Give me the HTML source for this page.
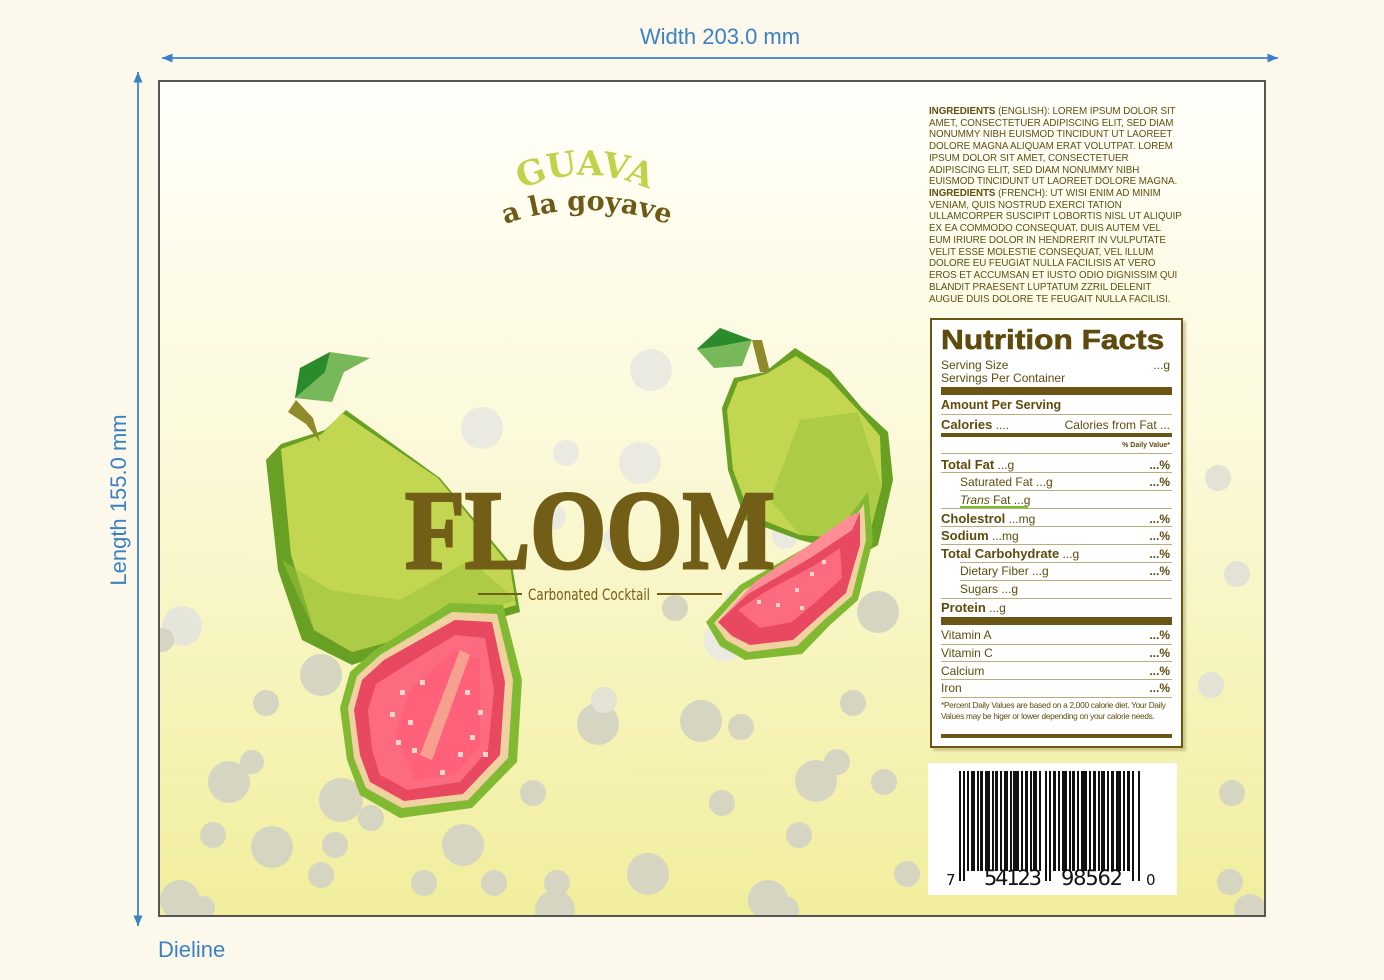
<!DOCTYPE html>
<html><head><meta charset="utf-8"><style>
*{margin:0;padding:0;box-sizing:border-box}
body{width:1384px;height:980px;background:#fcf8ec;position:relative;overflow:hidden;font-family:"Liberation Sans",sans-serif}
.a{position:absolute;white-space:nowrap}
.ing{position:absolute;left:929px;top:106px;font-size:9.8px;line-height:11.72px;color:#5f4f0e;letter-spacing:-0.05px;white-space:nowrap}
.nf{position:absolute;left:930px;top:318px;width:253px;height:430px;background:#fff;border:2px solid #6b5514;box-shadow:3px 3px 2px rgba(150,140,80,.4)}
.nf .a{color:#5e4b0d;font-size:12px}
.b{font-weight:bold}
.ln{position:absolute;height:1px;background:#b9ad80}
.bar{position:absolute;background:#6b5514;left:9px;width:231px}
.r{right:11px}
</style></head><body>
<svg class="a" style="left:0;top:0" width="1384" height="980">
<defs>
<linearGradient id="bg" x1="0" y1="0" x2="0" y2="1"><stop offset="0" stop-color="#fffffb"/><stop offset=".45" stop-color="#fbf9d8"/><stop offset="1" stop-color="#f1ee9c"/></linearGradient>
<marker id="ar" markerWidth="8" markerHeight="8" refX="7" refY="4" orient="auto"><path d="M0,1 L7,4 L0,7" fill="#3a82c4"/></marker>
<clipPath id="cl"><rect x="160" y="82" width="1104" height="833"/></clipPath>
</defs>
<line x1="162" y1="58" x2="1278" y2="58" stroke="#3a82c4" stroke-width="1.5" marker-end="url(#ar)"/>
<line x1="1278" y1="58" x2="162" y2="58" stroke="#3a82c4" stroke-width="1.5" marker-end="url(#ar)"/>
<line x1="138" y1="72" x2="138" y2="926" stroke="#3a82c4" stroke-width="1.5" marker-end="url(#ar)"/>
<line x1="138" y1="926" x2="138" y2="72" stroke="#3a82c4" stroke-width="1.5" marker-end="url(#ar)"/>
<text x="720" y="44" font-size="22" fill="#3a82c4" text-anchor="middle" font-family="Liberation Sans">Width 203.0 mm</text>
<text x="126" y="500" font-size="22" fill="#3a82c4" text-anchor="middle" font-family="Liberation Sans" transform="rotate(-90 126 500)">Length 155.0 mm</text>
<text x="158" y="957" font-size="22" fill="#3a82c4" font-family="Liberation Sans">Dieline</text>
<rect x="159" y="81" width="1106" height="835" fill="url(#bg)" stroke="#555" stroke-width="2"/>
<g clip-path="url(#cl)">
<g fill="#d6d5c2">
<circle cx="182" cy="626" r="20" fill="#e6e5da"/><circle cx="321" cy="675" r="21"/><circle cx="266" cy="703" r="13"/><circle cx="229" cy="782" r="21"/><circle cx="252" cy="762" r="12"/><circle cx="213" cy="835" r="13"/><circle cx="272" cy="847" r="21"/><circle cx="341" cy="800" r="22"/><circle cx="371" cy="818" r="13"/><circle cx="335" cy="845" r="13"/><circle cx="321" cy="875" r="13"/><circle cx="180" cy="900" r="20"/><circle cx="203" cy="908" r="12"/><circle cx="162" cy="640" r="12"/>
<circle cx="424" cy="883" r="13"/><circle cx="463" cy="845" r="21"/><circle cx="494" cy="883" r="13"/><circle cx="533" cy="793" r="13"/><circle cx="557" cy="883" r="13"/><circle cx="555" cy="910" r="20"/><circle cx="648" cy="874" r="21"/><circle cx="598" cy="724" r="21"/><circle cx="604" cy="700" r="13" fill="#e3e2d4"/><circle cx="701" cy="721" r="21"/><circle cx="741" cy="727" r="13"/><circle cx="722" cy="803" r="13"/><circle cx="799" cy="835" r="13"/><circle cx="816" cy="781" r="21"/><circle cx="837" cy="762" r="13"/><circle cx="884" cy="782" r="13"/><circle cx="907" cy="874" r="13"/><circle cx="768" cy="900" r="20"/><circle cx="785" cy="910" r="14"/><circle cx="853" cy="703" r="13"/><circle cx="878" cy="612" r="21"/><circle cx="675" cy="608" r="13"/>
<circle cx="1232" cy="793" r="13"/><circle cx="1211" cy="685" r="13" fill="#e3e2d4"/><circle cx="1237" cy="574" r="13" fill="#e3e2d4"/><circle cx="1218" cy="478" r="13" fill="#e3e2d4"/><circle cx="1230" cy="882" r="13"/><circle cx="1250" cy="910" r="16"/>
</g>
<g fill="#ebeae0">
<circle cx="651" cy="370" r="21"/><circle cx="482" cy="428" r="21"/><circle cx="640" cy="463" r="21"/><circle cx="566" cy="453" r="13"/><circle cx="616" cy="540" r="13"/><circle cx="553" cy="517" r="13"/><circle cx="743" cy="608" r="21"/><circle cx="725" cy="640" r="21"/><circle cx="785" cy="536" r="13"/>
</g>
<!-- left guava -->
<polygon points="266,460 281,444 325,430 346,410 440,478 512,565 520,612 440,635 352,665 302,640 278,570" fill="#67a022"/>
<polygon points="281,449 322,434 342,413 438,478 510,566 516,605 440,628 352,652 314,630 291,555" fill="#c3d652"/>
<polygon points="282,560 330,590 400,600 470,560 516,600 440,628 352,652 314,630" fill="#9cc23e" opacity=".55"/>
<path d="M320,442 L306,424 L288,412 L296,400 L313,418 Z" fill="#8f8a2c"/>
<polygon points="295,398 300,368 330,352 370,358 344,372 332,402" fill="#77b85a"/>
<polygon points="295,398 300,368 330,352 325,372" fill="#2b8a2c"/>
<!-- right guava -->
<polygon points="734,378 765,372 795,348 830,370 862,408 888,432 893,480 878,545 860,555 800,540 745,520 728,470 722,408" fill="#67a022"/>
<polygon points="738,382 766,374 796,356 828,378 858,410 880,436 882,486 868,540 800,535 750,515 733,470 727,410" fill="#c3d652"/>
<polygon points="800,420 858,412 882,486 868,540 800,535 770,500" fill="#9cc23e" opacity=".55"/>
<path d="M770,372 L762,340 L752,340 L760,372 Z" fill="#8f8a2c"/>
<polygon points="697,349 720,328 752,340 742,366 714,368" fill="#77b85a"/>
<polygon points="697,349 720,328 752,340 720,346" fill="#2b8a2c"/>
<!-- left slice -->
<polygon points="340,708 350,672 375,650 450,603 503,605 522,680 517,762 472,808 400,818 360,795 347,760" fill="#82b933"/>
<polygon points="348,708 357,676 380,655 452,612 497,614 513,680 508,758 468,800 402,808 366,788 354,758" fill="#f0d2a0"/>
<polygon points="354,710 362,680 384,660 455,620 492,622 505,682 500,755 463,794 404,801 370,782 360,755" fill="#e84860"/>
<polygon points="368,710 376,684 398,670 455,635 485,638 494,690 488,750 460,782 408,790 380,775 372,750" fill="#fc6b80"/>
<polygon points="395,735 410,690 455,650 480,660 480,745 455,775 415,780" fill="#ff5d76" opacity=".7"/>
<polygon points="420,755 460,650 470,655 432,760" fill="#f7a090"/>
<g fill="#ffd6cc"><rect x="400" y="690" width="5" height="5"/><rect x="390" y="712" width="5" height="5"/><rect x="408" y="720" width="5" height="5"/><rect x="396" y="740" width="5" height="5"/><rect x="412" y="748" width="5" height="5"/><rect x="420" y="680" width="5" height="5"/><rect x="465" y="690" width="5" height="5"/><rect x="478" y="710" width="5" height="5"/><rect x="470" y="735" width="5" height="5"/><rect x="458" y="752" width="5" height="5"/><rect x="440" y="770" width="5" height="5"/><rect x="483" y="752" width="5" height="5"/></g>
<!-- right slice -->
<polygon points="706,622 740,585 805,548 848,518 868,492 873,540 858,600 830,625 802,654 745,660 720,646" fill="#82b933"/>
<polygon points="714,623 744,590 808,554 850,525 864,504 866,540 852,596 824,620 797,646 748,652 726,640" fill="#f0d2a0"/>
<polygon points="718,622 748,594 810,558 852,530 860,512 860,545 846,593 820,616 793,640 750,645 732,636" fill="#e84860"/>
<polygon points="738,610 765,592 815,565 840,548 842,578 818,600 792,622 760,628" fill="#fc6b80"/>
<polygon points="718,622 748,594 810,558 852,530 860,512 850,516 805,548 755,582" fill="#ff8d96"/>
<g fill="#ffd6cc"><rect x="757" y="600" width="4" height="4"/><rect x="776" y="603" width="4" height="4"/><rect x="795" y="588" width="4" height="4"/><rect x="810" y="572" width="4" height="4"/><rect x="822" y="560" width="4" height="4"/><rect x="800" y="606" width="4" height="4"/></g>
</g>
<!-- title -->
<path id="arc1" d="M515,192 Q585,158 655,192" fill="none"/>
<text font-family="DejaVu Serif" font-weight="bold" font-size="34" fill="#bfd24a"><textPath href="#arc1" startOffset="50%" text-anchor="middle">GUAVA</textPath></text>
<path id="arc2" d="M490,230 Q585,190 684,230" fill="none"/>
<text font-family="DejaVu Serif" font-weight="bold" font-size="27" fill="#6e5a15"><textPath href="#arc2" startOffset="50%" text-anchor="middle">a  la  goyave</textPath></text>
<text x="405" y="568" font-family="Liberation Serif" font-weight="bold" font-size="112" fill="#735e18" stroke="#735e18" stroke-width="3" textLength="370" lengthAdjust="spacingAndGlyphs">FLOOM</text>
<line x1="478" y1="594" x2="522" y2="594" stroke="#735e18" stroke-width="2"/>
<line x1="657" y1="594" x2="722" y2="594" stroke="#735e18" stroke-width="2"/>
<text x="589" y="600" font-family="DejaVu Sans Condensed, Liberation Sans Narrow, sans-serif" font-size="16" fill="#735e18" text-anchor="middle" textLength="122" lengthAdjust="spacingAndGlyphs">Carbonated Cocktail</text>
<!-- barcode -->
<rect x="928" y="763" width="249" height="132" fill="#fff"/>
<g fill="#111">
<rect x="959" y="771" width="2" height="110"/><rect x="963" y="771" width="2" height="110"/>
<rect x="967" y="771" width="2" height="100"/><rect x="971" y="771" width="4" height="100"/><rect x="977" y="771" width="2" height="100"/><rect x="980" y="771" width="3" height="100"/><rect x="985" y="771" width="5" height="100"/><rect x="992" y="771" width="2" height="100"/><rect x="995" y="771" width="3" height="100"/><rect x="1000" y="771" width="2" height="100"/><rect x="1004" y="771" width="4" height="100"/><rect x="1010" y="771" width="2" height="100"/><rect x="1013" y="771" width="6" height="100"/><rect x="1021" y="771" width="2" height="100"/><rect x="1025" y="771" width="3" height="100"/><rect x="1030" y="771" width="2" height="100"/><rect x="1033" y="771" width="4" height="100"/><rect x="1039" y="771" width="2" height="100"/>
<rect x="1045" y="771" width="2" height="110"/><rect x="1049" y="771" width="2" height="110"/>
<rect x="1053" y="771" width="3" height="100"/><rect x="1058" y="771" width="2" height="100"/><rect x="1062" y="771" width="5" height="100"/><rect x="1069" y="771" width="2" height="100"/><rect x="1072" y="771" width="3" height="100"/><rect x="1077" y="771" width="2" height="100"/><rect x="1081" y="771" width="6" height="100"/><rect x="1089" y="771" width="2" height="100"/><rect x="1093" y="771" width="3" height="100"/><rect x="1098" y="771" width="2" height="100"/><rect x="1101" y="771" width="4" height="100"/><rect x="1107" y="771" width="2" height="100"/><rect x="1111" y="771" width="3" height="100"/><rect x="1116" y="771" width="5" height="100"/><rect x="1123" y="771" width="2" height="100"/><rect x="1127" y="771" width="3" height="100"/>
<rect x="1132" y="771" width="2" height="110"/><rect x="1138" y="771" width="2" height="110"/>
</g>
<rect x="980" y="871" width="62" height="14" fill="#fff"/><rect x="1053" y="871" width="76" height="14" fill="#fff"/>
<g font-family="DejaVu Sans" fill="#111"><text x="946" y="885" font-size="15">7</text><text x="984" y="885" font-size="21" textLength="58">54123</text><text x="1061" y="885" font-size="21" textLength="62">98562</text><text x="1146" y="885" font-size="15">0</text></g>
</svg>
<div class="ing"><b>INGREDIENTS</b> (ENGLISH): LOREM IPSUM DOLOR SIT<br>AMET, CONSECTETUER ADIPISCING ELIT, SED DIAM<br>NONUMMY NIBH EUISMOD TINCIDUNT UT LAOREET<br>DOLORE MAGNA ALIQUAM ERAT VOLUTPAT. LOREM<br>IPSUM DOLOR SIT AMET, CONSECTETUER<br>ADIPISCING ELIT, SED DIAM NONUMMY NIBH<br>EUISMOD TINCIDUNT UT LAOREET DOLORE MAGNA.<br><b>INGREDIENTS</b> (FRENCH): UT WISI ENIM AD MINIM<br>VENIAM, QUIS NOSTRUD EXERCI TATION<br>ULLAMCORPER SUSCIPIT LOBORTIS NISL UT ALIQUIP<br>EX EA COMMODO CONSEQUAT. DUIS AUTEM VEL<br>EUM IRIURE DOLOR IN HENDRERIT IN VULPUTATE<br>VELIT ESSE MOLESTIE CONSEQUAT, VEL ILLUM<br>DOLORE EU FEUGIAT NULLA FACILISIS AT VERO<br>EROS ET ACCUMSAN ET IUSTO ODIO DIGNISSIM QUI<br>BLANDIT PRAESENT LUPTATUM ZZRIL DELENIT<br>AUGUE DUIS DOLORE TE FEUGAIT NULLA FACILISI.</div>
<div class="nf">
<div class="a b" style="left:9px;top:4px;font-size:28px;color:#5e4b0d;transform:scaleX(1.13);transform-origin:left;-webkit-text-stroke:0.6px #5e4b0d">Nutrition Facts</div>
<div class="a" style="left:9px;top:38px">Serving Size</div><div class="a r" style="top:38px">...g</div>
<div class="a" style="left:9px;top:51px">Servings Per Container</div>
<div class="bar" style="top:67px;height:8px"></div>
<div class="a b" style="left:9px;top:78px;font-size:12.5px">Amount Per Serving</div>
<div class="ln" style="left:9px;width:231px;top:94px"></div>
<div class="a" style="left:9px;top:97px"><b style="font-size:13px">Calories</b> ....</div><div class="a r" style="top:98px">Calories from Fat ...</div>
<div class="bar" style="top:113px;height:4px"></div>
<div class="a b r" style="top:122px;font-size:7px!important">% Daily Value*</div>
<div class="ln" style="left:9px;width:231px;top:133px"></div>
<div class="a" style="left:9px;top:137px"><b style="font-size:13px">Total Fat</b> ...g</div><div class="a b r" style="top:138px">...%</div>
<div class="ln" style="left:9px;width:231px;top:152px"></div>
<div class="a" style="left:28px;top:155px">Saturated Fat ...g</div><div class="a b r" style="top:155px">...%</div>
<div class="ln" style="left:28px;width:212px;top:170px"></div>
<div class="a" style="left:28px;top:173px"><i>Trans</i> Fat ...g</div>
<div style="position:absolute;left:28px;top:186px;width:68px;height:2px;background:#7fc030"></div>
<div class="ln" style="left:9px;width:231px;top:188px"></div>
<div class="a" style="left:9px;top:191px"><b style="font-size:13px">Cholestrol</b> ...mg</div><div class="a b r" style="top:192px">...%</div>
<div class="ln" style="left:9px;width:231px;top:206px"></div>
<div class="a" style="left:9px;top:208px"><b style="font-size:13px">Sodium</b> ...mg</div><div class="a b r" style="top:209px">...%</div>
<div class="ln" style="left:9px;width:231px;top:224px"></div>
<div class="a" style="left:9px;top:226px"><b style="font-size:13px">Total Carbohydrate</b> ...g</div><div class="a b r" style="top:227px">...%</div>
<div class="ln" style="left:28px;width:212px;top:242px"></div>
<div class="a" style="left:28px;top:244px">Dietary Fiber ...g</div><div class="a b r" style="top:244px">...%</div>
<div class="ln" style="left:28px;width:212px;top:260px"></div>
<div class="a" style="left:28px;top:262px">Sugars ...g</div>
<div class="ln" style="left:9px;width:231px;top:278px"></div>
<div class="a" style="left:9px;top:280px"><b style="font-size:13px">Protein</b> ...g</div>
<div class="bar" style="top:297px;height:8px"></div>
<div class="a" style="left:9px;top:308px">Vitamin A</div><div class="a b r" style="top:308px">...%</div>
<div class="ln" style="left:9px;width:231px;top:324px"></div>
<div class="a" style="left:9px;top:326px">Vitamin C</div><div class="a b r" style="top:326px">...%</div>
<div class="ln" style="left:9px;width:231px;top:341px"></div>
<div class="a" style="left:9px;top:344px">Calcium</div><div class="a b r" style="top:344px">...%</div>
<div class="ln" style="left:9px;width:231px;top:359px"></div>
<div class="a" style="left:9px;top:361px">Iron</div><div class="a b r" style="top:361px">...%</div>
<div class="ln" style="left:9px;width:231px;top:377px"></div>
<div class="a" style="left:9px;top:380px;font-size:8.3px!important;line-height:11px;letter-spacing:-0.3px;white-space:normal;width:228px">*Percent Daily Values are based on a 2,000 calorie diet. Your Daily Values may be higer or lower depending on your calorie needs.</div>
<div class="bar" style="top:414px;height:4px"></div>
</div>
</body></html>
